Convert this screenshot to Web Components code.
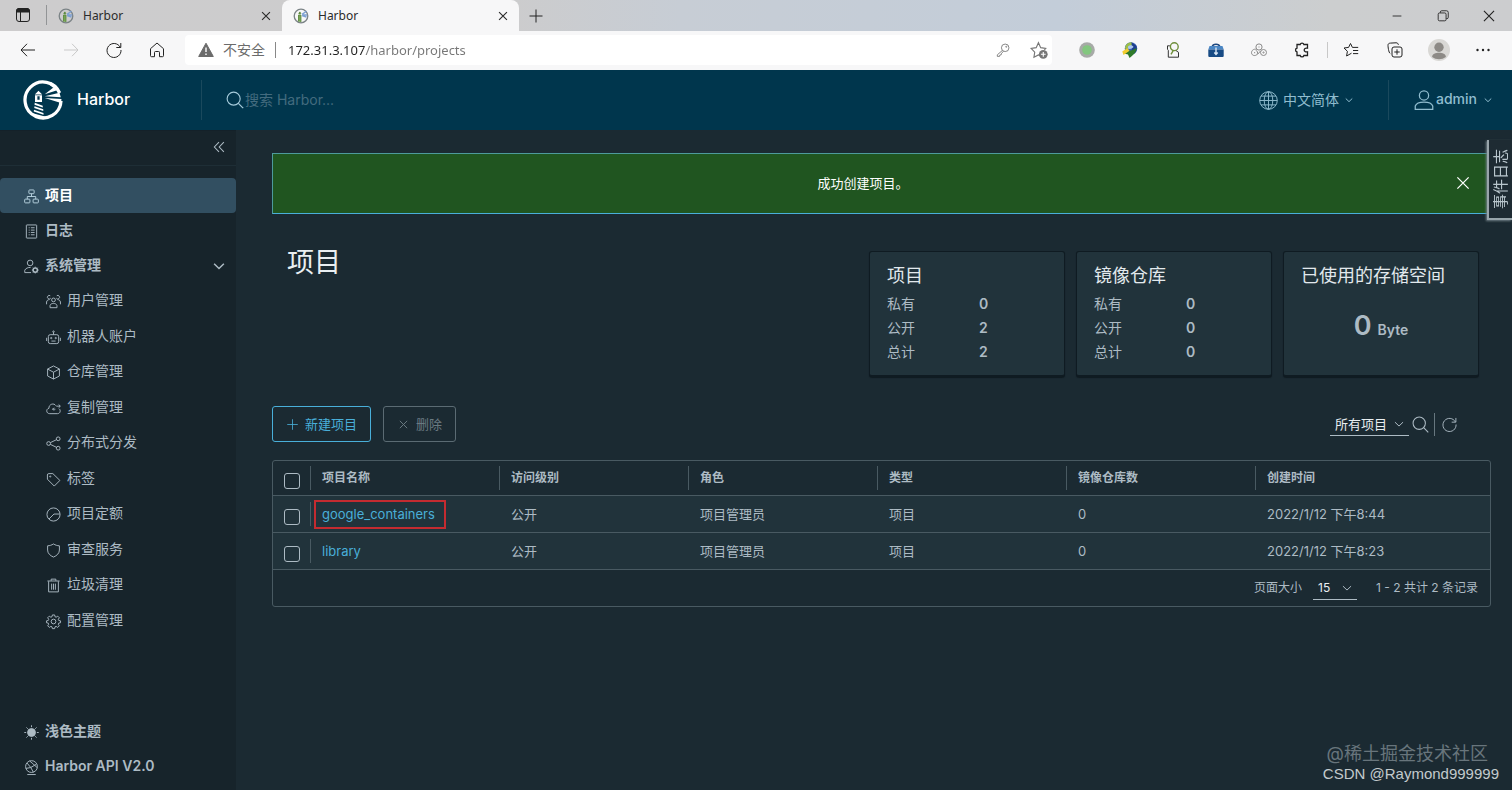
<!DOCTYPE html>
<html lang="zh-CN">
<head>
<meta charset="utf-8">
<title>Harbor</title>
<style>
  html, body { margin: 0; }
  body {
    min-height: 100vh;
    background: #1b2a32;
    color: #adbbc4;
    font-family: Inter, "Noto Sans CJK SC", sans-serif;
    font-size: 14px;
  }
</style>
</head>
<body>
<harbor-app></harbor-app>
<script>
/* ---------- shared ---------- */
const RESET = `
  *, *::before, *::after { box-sizing: border-box; }
  button, input, select { font: inherit; color: inherit; background: none; border: 0; margin: 0; padding: 0; outline: none; }
  button { display: inline-flex; align-items: center; justify-content: center; }
  a { color: inherit; text-decoration: none; }
  ul { list-style: none; margin: 0; padding: 0; }
  h1, h2, p { margin: 0; font-weight: 400; }
`;
function define(name, css, html) {
  customElements.define(name, class extends HTMLElement {
    constructor() {
      super();
      const t = document.createElement('template');
      t.innerHTML = `<style>${RESET}${css}</style>${typeof html === 'function' ? html(this) : html}`;
      this.attachShadow({ mode: 'open' }).append(t.content.cloneNode(true));
    }
  });
}

/* ---------- icons (16 unit grid, stroked) ---------- */
const ICONS = {
  panel: '<rect x="1.5" y="1.5" width="13" height="13" rx="2.5"/><path d="M1.5 5V4a2.500 2.500 0 0 1 2.500-2.500h8A2.500 2.500 0 0 1 14.500 4v1z" fill="currentColor"/><path d="M5.500 5v9.500"/>',
  favicon: '<circle cx="8" cy="8" r="6.800" stroke="#7b8386" stroke-width="1.300"/><path d="M5.600 13.500V7h2.300v7" stroke="#5d8b3e" fill="#7aa858"/><path d="M5.800 5.500l1-1.600 1 1.600z" stroke="#5d8b3e"/><path d="M9 6.400l4.500-3.200M9.200 7h5M9 7.600l4.500 1.400" stroke="#7ea0d2" stroke-width="1.400"/>',
  close: '<path d="M3.500 3.500l9 9M12.500 3.500l-9 9"/>',
  plus: '<path d="M8 1.500v13M1.500 8h13"/>',
  minus: '<path d="M3 8h10"/>',
  restore: '<rect x="2.500" y="4.500" width="9" height="9" rx="1.500"/><path d="M5 4.300V3.500a1.500 1.500 0 0 1 1.500-1.500H12a2 2 0 0 1 2 2v5.500a1.500 1.500 0 0 1-1.500 1.500h-.8"/>',
  back: '<path d="M15 8H1.300M7 1.800L1 8l6 6.200"/>',
  forward: '<path d="M1 8h13.700M9 1.800L15 8l-6 6.200"/>',
  reload: '<path d="M14.200 5.200A7 7 0 1 0 15 8M14.800 1v4.500h-4.500"/>',
  home: '<path d="M1.500 6.700L8 1l6.500 5.700v7a1 1 0 0 1-1 1h-3v-4A1 1 0 0 0 9.500 9.500h-3a1 1 0 0 0-1 1v4.200h-3a1 1 0 0 1-1-1z"/>',
  warning: '<path d="M8 1.200L15.300 14.500H.7z" fill="currentColor" stroke-linejoin="round"/><path d="M8 5.500v4.600M8 11.600v1.400" stroke="#fff" stroke-width="1.400"/>',
  key: '<circle cx="10.500" cy="5.500" r="4.300"/><circle cx="11.700" cy="4.300" r=".6"/><path d="M7.300 8.500l-5.800 5v1.800h2.600l.3-1.600 1.600-.3.300-1.700 2.400-2.200"/>',
  staradd: '<path d="M9 13l-1.500-.6-4 2.100.7-4.600L1 6.600l4.500-.7L7.500 1.500l2 4.400 4.500.7-1.200 1.300"/><circle cx="11.800" cy="11.800" r="3.900" fill="currentColor" stroke="none"/><path d="M11.800 9.700v4.200M9.700 11.800h4.200" stroke="#fff"/>',
  green: '<circle cx="8" cy="8" r="7.800" fill="#a7aaa7" stroke="none"/><circle cx="8" cy="8" r="4.800" fill="#83c77f" stroke="none"/>',
  idm: '<circle cx="9" cy="6.500" r="6.200" fill="#3a62b5" stroke="none"/><path d="M2.900 6A6.200 6.200 0 0 1 9.500.3c2.500 1.500.8 4.500-2 6-1.800 1-4.300.6-4.600-.3z" fill="#9cbf4a" stroke="none"/><path d="M9.500.3l4.800 3.500c1.500 4-.8 7.700-4.300 8.800z" fill="#1d3f8f" stroke="none"/><path d="M6 4.500C8 2.500 10.500 3 11.500 5c-1.500 2-4 2.500-5.500 1.500z" fill="#a9c6ee" stroke="none"/><path d="M5 8.500c3 1 6-.5 9.500-2.500 0 4-2.500 6.500-7 10L6 12.500 2 11.500z" fill="#2f7a2a" stroke="none"/><path d="M.3 9.500l5-3.500 2.200 2.700L1.500 13z" fill="#f2cc2f" stroke="none"/>',
  person: '<circle cx="9.300" cy="4.700" r="3.900" stroke="#6f8f3c" stroke-width="1.400"/><path d="M4.800 3.800H2.500v3.500l.8 1v6.900h10.200V10.300l-2.300-1.500" stroke="#333"/><path d="M8.300 8.300L6 12.300" stroke="#6f8f3c" stroke-width="1.400"/>',
  toolbox: '<path d="M4.300 4.500C4.800 1.500 11.200 1.500 11.700 4.500" stroke="#1e477f" stroke-width="1.600"/><path d="M.3 7.500L1.500 4h13l1.200 3.500z" fill="#4a86c4" stroke="none"/><path d="M.3 7.500h15.400v6.500a1 1 0 0 1-1 1H1.300a1 1 0 0 1-1-1z" fill="#184b85" stroke="none"/><path d="M8 5.500v7M6.300 10.500L8 12.500l1.700-2" stroke="#d7e6f5" stroke-width="1.400"/>',
  circles: '<g stroke="#8b8b8b"><circle cx="8" cy="5" r="3.100"/><circle cx="12.500" cy="10.500" r="3"/><circle cx="12.500" cy="10.500" r=".6"/><path d="M5.500 7.400C2.500 6.500.5 8.700.5 10.700c0 3.400 5.300 4 6 .5.300-2-.8-2.500-1.700-2.600M8 4.500v1M3 10.700h1.200M6.500 12.500L9.500 9"/></g>',
  puzzle: '<path d="M3 2.500h3.200a1.900 1.900 0 0 1 3.700 0h3.600v3.700c-2.300-.6-3.300.6-3.300 1.800s1 2.400 3.300 1.800v3.700H9.900a1.900 1.900 0 0 1-3.700 0H3V9.900a1.900 1.900 0 0 1 0-3.700z" stroke-width="1.300"/>',
  favlist: '<path d="M8.500 11.200L3.600 14l.8-4.700L1 6l4.600-.6L7.500 1.500l1.900 3.900h5.800M10 8.500h5.200M10 11.600h5.200"/>',
  collections: '<rect x="5" y="5" width="10" height="10" rx="2"/><path d="M10 7.300v5.400M7.300 10h5.400M3.300 11.500C1.500 10.800 1 4.200 1 3.300 1 1.700 2 1.200 3.500 1.100L9 .8c1.500 0 2 .6 2.400 2"/>',
  avatar: '<circle cx="8" cy="8" r="8" fill="#d9d8d5" stroke="none"/><circle cx="8" cy="6" r="3.400" fill="#8d8a86" stroke="none"/><path d="M3 13c0-4 10-4 10 0a8 8 0 0 1-10 0z" fill="#8d8a86" stroke="none"/>',
  dots: '<g fill="currentColor" stroke="none"><circle cx="2.500" cy="8" r="1.200"/><circle cx="8" cy="8" r="1.200"/><circle cx="13.500" cy="8" r="1.200"/></g>',
  logo: '<path d="M14.650 5.200A7.200 7.200 0 1 0 15.200 8.400" stroke-width="1.300"/><path d="M12.600 2.700A7.200 7.200 0 0 0 11 1.500" stroke-width="1.300"/><g fill="currentColor" stroke="none"><path d="M4.700 5.800L6.200 4.300l1.500 1.500zM4.800 6.100h2.800v2.700H4.800z"/><path d="M4.700 9.100l3.200 1.200v.7L4.600 9.900zM4.600 10.500l3.500 1.200v.7l-3.600-1.200zM4.400 11.900l3.800 1.300v.7l-3.900-1.300zM3.500 13.200l5.300 1.400v.7H5z"/><path d="M8.700 5.700l4.100-3.200 1.200 1.500zM8.700 6.500l5.900-1.400.5 1.800zM8.700 7.200l6.700.4-.2 1.600z"/></g><path d="M6.200 6.500v1.400" stroke="#00364d" stroke-width=".9"/>',
  search: '<circle cx="6.800" cy="6.800" r="5.800"/><path d="M11 11l4.300 4.300"/>',
  globe: '<circle cx="8" cy="8" r="7.400"/><ellipse cx="8" cy="8" rx="3.600" ry="7.400"/><path d="M8 .6v14.800M.6 8h14.800M1.700 4.300h12.600M1.700 11.700h12.600"/>',
  user: '<circle cx="8" cy="4.300" r="3.700"/><path d="M1 15.400v-2.600C2.500 8.700 13.500 8.700 15 12.800v2.600z"/>',
  down: '<path d="M1.500 5l6.500 6.300L14.500 5"/>',
  collapse: '<path d="M8 1.500L1.800 8 8 14.500M14.500 1.500L8.300 8l6.200 6.500"/>',
  projects: '<rect x="5.200" y="1" width="5.600" height="4" rx=".8"/><rect x=".7" y="10.800" width="5.600" height="4" rx=".8"/><rect x="9.700" y="10.800" width="5.600" height="4" rx=".8"/><path d="M8 5v3M3.500 10.800V8h9v2.800"/>',
  logs: '<rect x="2.500" y="1" width="11" height="14" rx=".5"/><path d="M5 4h1M5 6.500h1M5 9h1M5 11.500h1M7.300 4h4M7.300 6.500h4M7.300 9h4M7.300 11.500h4"/>',
  admin: '<circle cx="6.500" cy="4.200" r="3"/><path d="M7.500 14.500H.8V12c.8-2 3.500-3.200 6.200-3"/><circle cx="12" cy="11.800" r="2.300" stroke-width="1.600"/><path d="M12 8.200v1M12 14.400v1M8.400 11.800h1M14.600 11.800h1M9.500 9.300l.7.700M13.800 13.600l.7.700M14.500 9.300l-.7.700M10.200 13.600l-.7.700"/>',
  users: '<circle cx="8" cy="6.300" r="2"/><path d="M4.300 14.600v-2.300c.5-3 6.900-3 7.400 0v2.300zM5 4.500a1.900 1.900 0 1 1-.5-2.700M3.700 6C2 6 .9 7 .6 8.500V11M11 4.500a1.900 1.900 0 1 0 .5-2.700M12.300 6c1.700 0 2.800 1 3.100 2.500V11"/>',
  robot: '<rect x="2.500" y="5" width="11" height="9.500" rx="2"/><path d="M8 5V2.600M.7 8.300v3.400M15.300 8.300v3.400M5.800 11.800h4.400"/><circle cx="8" cy="1.800" r=".8"/><circle cx="5.600" cy="8.600" r=".7"/><circle cx="10.400" cy="8.600" r=".7"/>',
  cube: '<path d="M8 1l6.300 3.300v7.400L8 15l-6.300-3.300V4.300zM1.700 4.300L8 7.700l6.300-3.400M8 7.700V15"/>',
  cloud: '<path d="M14 8.300c2 1.500 1.300 5.200-1.800 5.200H4c-3.900 0-4.300-5-.9-5.700C3 3.200 8.500 1.700 10.500 5M7 8.700h3M11 5.500h4M13.500 3.800L15.300 5.500 13.500 7.200M8.500 7.200L7 8.700l1.500 1.500"/>',
  share: '<circle cx="2.800" cy="8" r="2"/><circle cx="13" cy="3" r="2"/><circle cx="13" cy="13" r="2"/><path d="M4.600 7.100l6.600-3.200M4.600 8.900l6.600 3.200"/>',
  tag: '<path d="M1.500 3.200v4.500L8.800 15l6-6L7.300 1.700H3a1.500 1.500 0 0 0-1.500 1.500z"/><circle cx="4.500" cy="4.800" r=".6"/>',
  quota: '<circle cx="8" cy="8" r="7"/><path d="M14.800 7.500H8.500L3.200 12.800"/>',
  shield: '<path d="M8 1c2 1.300 4 1.900 6.300 2v4.500c0 3.500-2.700 6-6.300 7.500-3.600-1.500-6.300-4-6.300-7.500V3C4 2.900 6 2.300 8 1z"/>',
  trash: '<path d="M1.500 3.200h13M5.500 3V1.200h5V3M2.800 3.500v11.300h10.400V3.500M6 6v6.500M8 6v6.500M10 6v6.500"/>',
  cog: '<circle cx="8" cy="8" r="2.500"/><path d="M6.800 1h2.400l.4 1.900 1.200.5 1.700-1.100 1.700 1.700-1.100 1.700.5 1.200 1.900.4v2l-1.900.4-.5 1.200 1.100 1.700-1.700 1.700-1.700-1.100-1.200.5-.4 1.900H6.800l-.4-1.900-1.200-.5-1.700 1.100-1.700-1.700 1.100-1.700-.5-1.200L.5 9.300v-2l1.900-.4.5-1.200L1.800 4l1.700-1.700 1.700 1.100 1.200-.5z"/>',
  sun: '<circle cx="8" cy="8" r="4.200" fill="currentColor"/><path d="M8 .3v2M8 13.700v2M.3 8h2M13.700 8h2M2.600 2.600L4 4M12 12l1.400 1.400M13.400 2.600L12 4M4 12l-1.400 1.400"/>',
  api: '<circle cx="8" cy="7" r="6.300"/><path d="M3.200 3.200l4 4.800 6-3.500M7.200 8L10 13M2 9l5.200-1M6 1l3.500 3L14 8M3.500 15.500h9"/>',
};
customElements.define('ui-icon', class extends HTMLElement {
  constructor() {
    super();
    this.attachShadow({ mode: 'open' }).innerHTML = `
      <style>
        :host { display: inline-block; flex: none; width: 16px; height: 16px; }
        svg { display: block; width: 100%; height: 100%; fill: none; stroke: currentColor; stroke-width: var(--stroke, 1); overflow: visible; }
      </style>
      <svg viewBox="0 0 16 16" aria-hidden="true">${ICONS[this.getAttribute('name')] || ''}</svg>`;
  }
});

/* ---------- browser window ---------- */
define('browser-tab', `
  :host { display: flex; align-items: center; gap: 9px; width: 235px; height: 31px; padding: 0 6px 0 11px; color: #2b2b2b; }
  :host([active]) { width: 237px; background: #f7f7f8; border-radius: 8px 8px 0 0; }
  .title { flex: 1; }
  button { width: 20px; height: 20px; }
  button ui-icon { width: 14px; height: 14px; --stroke: 1.3; }
`, `<ui-icon name="favicon"></ui-icon><span class="title"><slot></slot></span><button aria-label="关闭标签页"><ui-icon name="close"></ui-icon></button>`);

define('browser-tabs', `
  :host { display: flex; height: 31px; font: 12px/30px "Noto Sans", sans-serif; color: #222;
    background: linear-gradient(90deg, #cdcccd, #cccccd 34%, #c7cdd5 45%, #c3cdd9 70%, #cccecf 88%, #cccdcf); }
  .menu { width: 47px; border-right: 1px solid #929496; height: 20px; margin-top: 5px; }
  .add { width: 34px; height: 31px; }
  .spacer { flex: 1; }
  .win { width: 46px; height: 31px; }
  .win ui-icon { width: 14px; height: 14px; }
  .win:last-child ui-icon { width: 18px; height: 18px; }
`, `
  <button class="menu" aria-label="标签页操作"><ui-icon name="panel"></ui-icon></button>
  <browser-tab>Harbor</browser-tab><browser-tab active>Harbor</browser-tab>
  <button class="add" aria-label="新建标签页"><ui-icon name="plus"></ui-icon></button>
  <span class="spacer"></span>
  <button class="win" aria-label="最小化"><ui-icon name="minus"></ui-icon></button>
  <button class="win" aria-label="还原"><ui-icon name="restore"></ui-icon></button>
  <button class="win" aria-label="关闭"><ui-icon name="close"></ui-icon></button>
`);

define('browser-toolbar', `
  :host { display: flex; align-items: center; height: 39px; padding: 0 7px 2px 6px; background: #f7f7f8; color: #222; font: 14px "Noto Sans", "Noto Sans CJK SC", sans-serif; }
  button { width: 43px; height: 34px; }
  button[disabled] { color: #c9c9c9; }
  .wide { width: 44px; }
  .address { flex: 1; display: flex; align-items: center; gap: 10px; height: 30px; margin: 0 13px 0 7px; padding-left: 13px; background: #fff; border-radius: 4px; color: #6b6b6b; }
  .address label { display: flex; align-items: center; gap: 9px; height: 26px; }
  .address label span { padding-bottom: 2px; }
  .rule { width: 1px; height: 16px; background: #888; }
  input { flex: 1; min-width: 0; margin-left: 2px; font: 13px/20px "Noto Sans", sans-serif; color: #777;
    background: linear-gradient(90deg, #222 0 77px, #777 77px); background-clip: text; -webkit-text-fill-color: transparent; }
  .address button { width: 26px; color: #777; }
  .address ui-icon[name=staradd] { width: 18px; height: 18px; }
  .address ui-icon[name=key] { width: 14px; height: 14px; }
  .sep { width: 1px; height: 16px; margin: 0 1px 0 4px; background: #c8c8c8; }
  .avatar ui-icon { width: 22px; height: 22px; }
`, `
  <button aria-label="后退"><ui-icon name="back"></ui-icon></button>
  <button aria-label="前进" disabled><ui-icon name="forward"></ui-icon></button>
  <button aria-label="刷新"><ui-icon name="reload"></ui-icon></button>
  <button aria-label="主页"><ui-icon name="home"></ui-icon></button>
  <div class="address">
    <label for="url"><ui-icon name="warning"></ui-icon><span>不安全</span></label><span class="rule"></span>
    <input id="url" value="172.31.3.107/harbor/projects">
    <button aria-label="密码"><ui-icon name="key"></ui-icon></button>
    <button aria-label="收藏"><ui-icon name="staradd"></ui-icon></button>
  </div>
  ${['green', 'idm', 'person', 'toolbox', 'circles', 'puzzle'].map(n => `<button aria-label="扩展"><ui-icon name="${n}"></ui-icon></button>`).join('')}
  <span class="sep"></span>
  <button class="wide" aria-label="收藏夹"><ui-icon name="favlist"></ui-icon></button>
  <button class="wide" aria-label="集锦"><ui-icon name="collections"></ui-icon></button>
  <button class="wide avatar" aria-label="个人资料"><ui-icon name="avatar"></ui-icon></button>
  <button class="wide" aria-label="更多"><ui-icon name="dots"></ui-icon></button>
`);

/* ---------- Harbor ---------- */
define('harbor-header', `
  :host { display: flex; align-items: center; height: 60px; background: #00364d; color: #90bdcf; }
  .brand { display: flex; align-items: center; gap: 14px; width: 202px; height: 40px; padding-left: 23px; border-right: 1px solid #1a495d; color: #fff; font-size: 16px; font-weight: 500; }
  .brand ui-icon { width: 40px; height: 40px; }
  span { padding-bottom: 3px; }
  form { flex: 1; display: flex; align-items: center; gap: 1px; padding-left: 24px; }
  form ui-icon { width: 18px; height: 18px; color: #a5cbdb; }
  input { width: 260px; line-height: 24px; }
  input::placeholder { color: #436b7e; opacity: 1; }
  button { height: 40px; gap: 5px; }
  .globe { width: 19px; height: 19px; --stroke: .8; }
  .user { width: 20px; height: 20px; }
  .caret { width: 8px; height: 8px; margin-left: 1px; --stroke: 2; }
  .lang { padding-right: 35px; border-right: 1px solid #1a495d; }
  .account { padding: 0 20px 0 25px; gap: 2px; font-weight: 500; }
  .account .caret { margin-left: 5px; }
`, `
  <a class="brand" href="#"><ui-icon name="logo"></ui-icon><span>Harbor</span></a>
  <form role="search"><ui-icon name="search"></ui-icon><input type="text" aria-label="搜索" placeholder="搜索 Harbor..."></form>
  <button class="lang"><ui-icon class="globe" name="globe"></ui-icon><span>中文简体</span><ui-icon class="caret" name="down"></ui-icon></button>
  <button class="account"><ui-icon class="user" name="user"></ui-icon><span>admin</span><ui-icon class="caret" name="down"></ui-icon></button>
`);

define('nav-item', `
  :host { display: block; font-size: 14px; }
  a { display: flex; align-items: center; gap: 6px; height: 100%; min-height: 35px; padding: 0 11px 0 24px; font-weight: 700; }
  .icon { width: 15px; height: 15px; margin-top: 2px; }
  .label { flex: 1; padding-bottom: 3px; }
  .caret { width: 12px; height: 12px; --stroke: 2; }
  :host([active]) a { background: #324f61; border-radius: 4px; color: #fff; }
  :host([active]) .icon { color: #b9d3e0; }
  :host([sub]) a { padding-left: 46px; font-weight: 400; }
  :host([light]) a { font-weight: 600; }
`, el => `<a href="#"><ui-icon class="icon" name="${el.getAttribute('icon')}"></ui-icon><span class="label"><slot></slot></span>${el.hasAttribute('expanded') ? '<ui-icon class="caret" name="down"></ui-icon>' : ''}</a>`);

define('side-nav', `
  :host { display: flex; flex-direction: column; width: 236px; background: #17242b; border-top: 1px solid #142129; }
  .top { display: flex; justify-content: flex-end; height: 35px; padding-right: 7px; border-bottom: 1px solid #1e2e36; }
  .top button { width: 20px; height: 32px; }
  .top ui-icon { width: 12px; height: 12px; --stroke: 1.4; }
  nav { flex: 1; padding-top: 12px; }
  .sub { display: grid; grid-auto-rows: 1fr; height: 355px; }
  footer { padding-bottom: 6px; }
`, `
  <div class="top"><button aria-label="收起菜单"><ui-icon name="collapse"></ui-icon></button></div>
  <nav>
    <nav-item icon="projects" active>项目</nav-item>
    <nav-item icon="logs">日志</nav-item>
    <nav-item icon="admin" expanded>系统管理</nav-item>
    <div class="sub">
      <nav-item sub icon="users">用户管理</nav-item>
      <nav-item sub icon="robot">机器人账户</nav-item>
      <nav-item sub icon="cube">仓库管理</nav-item>
      <nav-item sub icon="cloud">复制管理</nav-item>
      <nav-item sub icon="share">分布式分发</nav-item>
      <nav-item sub icon="tag">标签</nav-item>
      <nav-item sub icon="quota">项目定额</nav-item>
      <nav-item sub icon="shield">审查服务</nav-item>
      <nav-item sub icon="trash">垃圾清理</nav-item>
      <nav-item sub icon="cog">配置管理</nav-item>
    </div>
  </nav>
  <footer>
    <nav-item icon="sun">浅色主题</nav-item>
    <nav-item icon="api" light>Harbor API V2.0</nav-item>
  </footer>
`);

define('alert-bar', `
  :host { display: flex; align-items: center; height: 61px; padding: 0 17px 2px 0; background: #205520; border: 1px solid #4d9a9c; border-bottom-color: #49afd9; color: #fff; font-size: 13px; }
  p { flex: 1; text-align: center; }
  button { width: 20px; height: 20px; }
  ui-icon { width: 20px; height: 20px; }
`, `<p><slot></slot></p><button aria-label="关闭"><ui-icon name="close"></ui-icon></button>`);

define('stat-card', `
  :host { display: block; width: 196px; height: 126px; padding: 12px 17px; background: #21333b; border: 1px solid #0f1b22; border-bottom-width: 2px; border-radius: 3px; box-shadow: 0 1px 1px #0f1a20; }
  h2 { font-size: 18px; line-height: 24px; color: #e2e9ed; margin-bottom: 4px; white-space: nowrap; }
`, el => `<h2>${el.getAttribute('heading')}</h2><slot></slot>`);

define('count-row', `
  :host { display: flex; line-height: 24px; }
  span { width: 92px; }
  b { font-weight: 600; }
`, el => `<span>${el.getAttribute('label')}</span><b><slot></slot></b>`);

define('storage-value', `
  :host { display: flex; align-items: baseline; justify-content: center; gap: 6px; padding-top: 16px; font-weight: 600; line-height: 36px; }
  strong { font-size: 27px; font-weight: 600; }
`, `<strong>0</strong><span>Byte</span>`);

define('drop-down', `
  :host { display: inline-grid; grid-template-columns: 1fr; align-items: center; border-bottom: 1px solid #adbbc4; color: #e9eef1; }
  select, ui-icon { grid-area: 1 / 1; }
  select { appearance: none; width: 100%; height: 23px; padding-left: 5px; }
  ui-icon { justify-self: end; width: 10px; height: 10px; margin-right: 5px; pointer-events: none; color: #adbbc4; --stroke: 1.6; }
`, el => `<select aria-label="${el.getAttribute('label')}">${el.getAttribute('options').split('|').map(o => `<option>${o}</option>`).join('')}</select><ui-icon name="down"></ui-icon>`);

define('action-bar', `
  :host { display: flex; align-items: center; gap: 12px; margin-top: 29px; padding-right: 31px; font-size: 13px; }
  button.btn { height: 36px; border: 1px solid #49afd9; border-radius: 3px; padding: 0 13px; gap: 6px; color: #49afd9; }
  .btn ui-icon { width: 13px; height: 13px; }
  .btn ui-icon[name=close] { --stroke: 1.2; }
  .btn span { padding-bottom: 2px; }
  button.btn[disabled] { border-color: #5b6b73; color: #6b7a82; }
  .filter { display: flex; align-items: center; margin-left: auto; }
  drop-down { width: 79px; }
  .tool { width: 22px; height: 22px; }
  .tool ui-icon { width: 17px; height: 17px; }
  .last ui-icon { width: 15px; height: 15px; }
  .rule { width: 1px; height: 23px; margin: 0 3px; background: #67777f; }
`, `
  <button class="btn"><ui-icon name="plus"></ui-icon><span>新建项目</span></button>
  <button class="btn" disabled><ui-icon name="close"></ui-icon><span>删除</span></button>
  <div class="filter">
    <drop-down label="项目类型" options="所有项目"></drop-down>
    <button class="tool" aria-label="搜索"><ui-icon name="search"></ui-icon></button>
    <span class="rule"></span>
    <button class="tool last" aria-label="刷新"><ui-icon name="reload"></ui-icon></button>
  </div>
`);

const PROJECTS = [
  ['google_containers', '公开', '项目管理员', '项目', '0', '2022/1/12 下午8:44'],
  ['library', '公开', '项目管理员', '项目', '0', '2022/1/12 下午8:23'],
];
define('project-grid', `
  :host { display: block; margin-top: 18px; border: 1px solid #495a62; border-radius: 3px; font-size: 13px; }
  table { width: 100%; table-layout: fixed; border-collapse: separate; border-spacing: 0; }
  th, td { padding: 0 0 1px; text-align: left; border-bottom: 1px solid #495a62; }
  th { width: 189px; height: 35px; font-size: 12px; font-weight: 700; }
  th:last-child { width: auto; }
  td { height: 37px; background: #21333b; }
  th.pick { width: 37px; }
  .pick { padding: 6px 0 0 11px; }
  .pick input { appearance: none; display: block; width: 16px; height: 16px; border: 1px solid #adbbc4; border-radius: 3px; }
  .cell { display: block; line-height: 24px; padding-left: 11px; border-left: 1px solid transparent; white-space: nowrap; }
  th .cell, .pick + td .cell { border-left-color: #495a62; }
  td a { position: relative; color: #49afd9; }
  tr.marked a::after { content: ""; position: absolute; inset: -6px -11px -7px -8px; border: 2px solid #c42b30; }
  footer { display: flex; align-items: center; justify-content: flex-end; height: 36px; padding-right: 12px; font-size: 12px; }
  footer span { padding-bottom: 3px; }
  drop-down { width: 44px; margin: 0 19px 0 11px; }
`, `
  <table>
    <thead><tr><th class="pick"><input type="checkbox" aria-label="全选"></th>${['项目名称', '访问级别', '角色', '类型', '镜像仓库数', '创建时间'].map(h => `<th><span class="cell">${h}</span></th>`).join('')}</tr></thead>
    <tbody>${PROJECTS.map((r, i) => `<tr${i ? '' : ' class="marked"'}><td class="pick"><input type="checkbox" aria-label="选择 ${r[0]}"></td>${r.map((c, j) => `<td><span class="cell">${j ? c : `<a href="#">${c}</a>`}</span></td>`).join('')}</tr>`).join('')}</tbody>
  </table>
  <footer><span>页面大小</span><drop-down label="页面大小" options="15|25|50"></drop-down><span>1 - 2 共计 2 条记录</span></footer>
`);

define('event-tab', `
  :host { position: absolute; right: 0; top: 10px; }
  button { width: 25px; height: 80px; background: #1e2b33; color: #b9c6cd; border: solid #98a5ab; border-width: 0 0 2px 2px; box-shadow: -1px 1px 2px #6f7d84; font-size: 15px; }
  span { writing-mode: vertical-rl; text-orientation: sideways; transform: rotate(180deg); white-space: nowrap; padding-left: 2px; }
`, `<button><span>事件日志</span></button>`);

define('page-marks', `
  :host { position: absolute; right: 13px; bottom: 6px; display: flex; flex-direction: column; align-items: flex-end; pointer-events: none; }
  .site { font-size: 18px; line-height: 20px; margin-right: 11px; color: #68757c; }
  .author { font: 15px/20px "Liberation Sans", sans-serif; color: #c3cacd; }
`, `<span class="site">@稀土掘金技术社区</span><span class="author">CSDN @Raymond999999</span>`);

define('projects-page', `
  :host { display: block; flex: 1; min-width: 0; padding: 23px 21px 40px 36px; }
  .summary { display: flex; gap: 11px; padding: 37px 12px 0 15px; }
  h1 { flex: 1; font-size: 27px; line-height: 24px; color: #e9eef1; }
`, `
  <alert-bar>成功创建项目。</alert-bar>
  <div class="summary">
    <h1>项目</h1>
    <stat-card heading="项目"><count-row label="私有">0</count-row><count-row label="公开">2</count-row><count-row label="总计">2</count-row></stat-card>
    <stat-card heading="镜像仓库"><count-row label="私有">0</count-row><count-row label="公开">0</count-row><count-row label="总计">0</count-row></stat-card>
    <stat-card heading="已使用的存储空间"><storage-value></storage-value></stat-card>
  </div>
  <action-bar></action-bar>
  <project-grid></project-grid>
`);

define('harbor-app', `
  :host { display: flex; flex-direction: column; min-height: 100vh; }
  .body { position: relative; flex: 1; display: flex; }
`, `
  <browser-tabs></browser-tabs>
  <browser-toolbar></browser-toolbar>
  <harbor-header></harbor-header>
  <div class="body"><side-nav></side-nav><projects-page></projects-page><event-tab></event-tab><page-marks></page-marks></div>
`);
</script>
</body>
</html>
